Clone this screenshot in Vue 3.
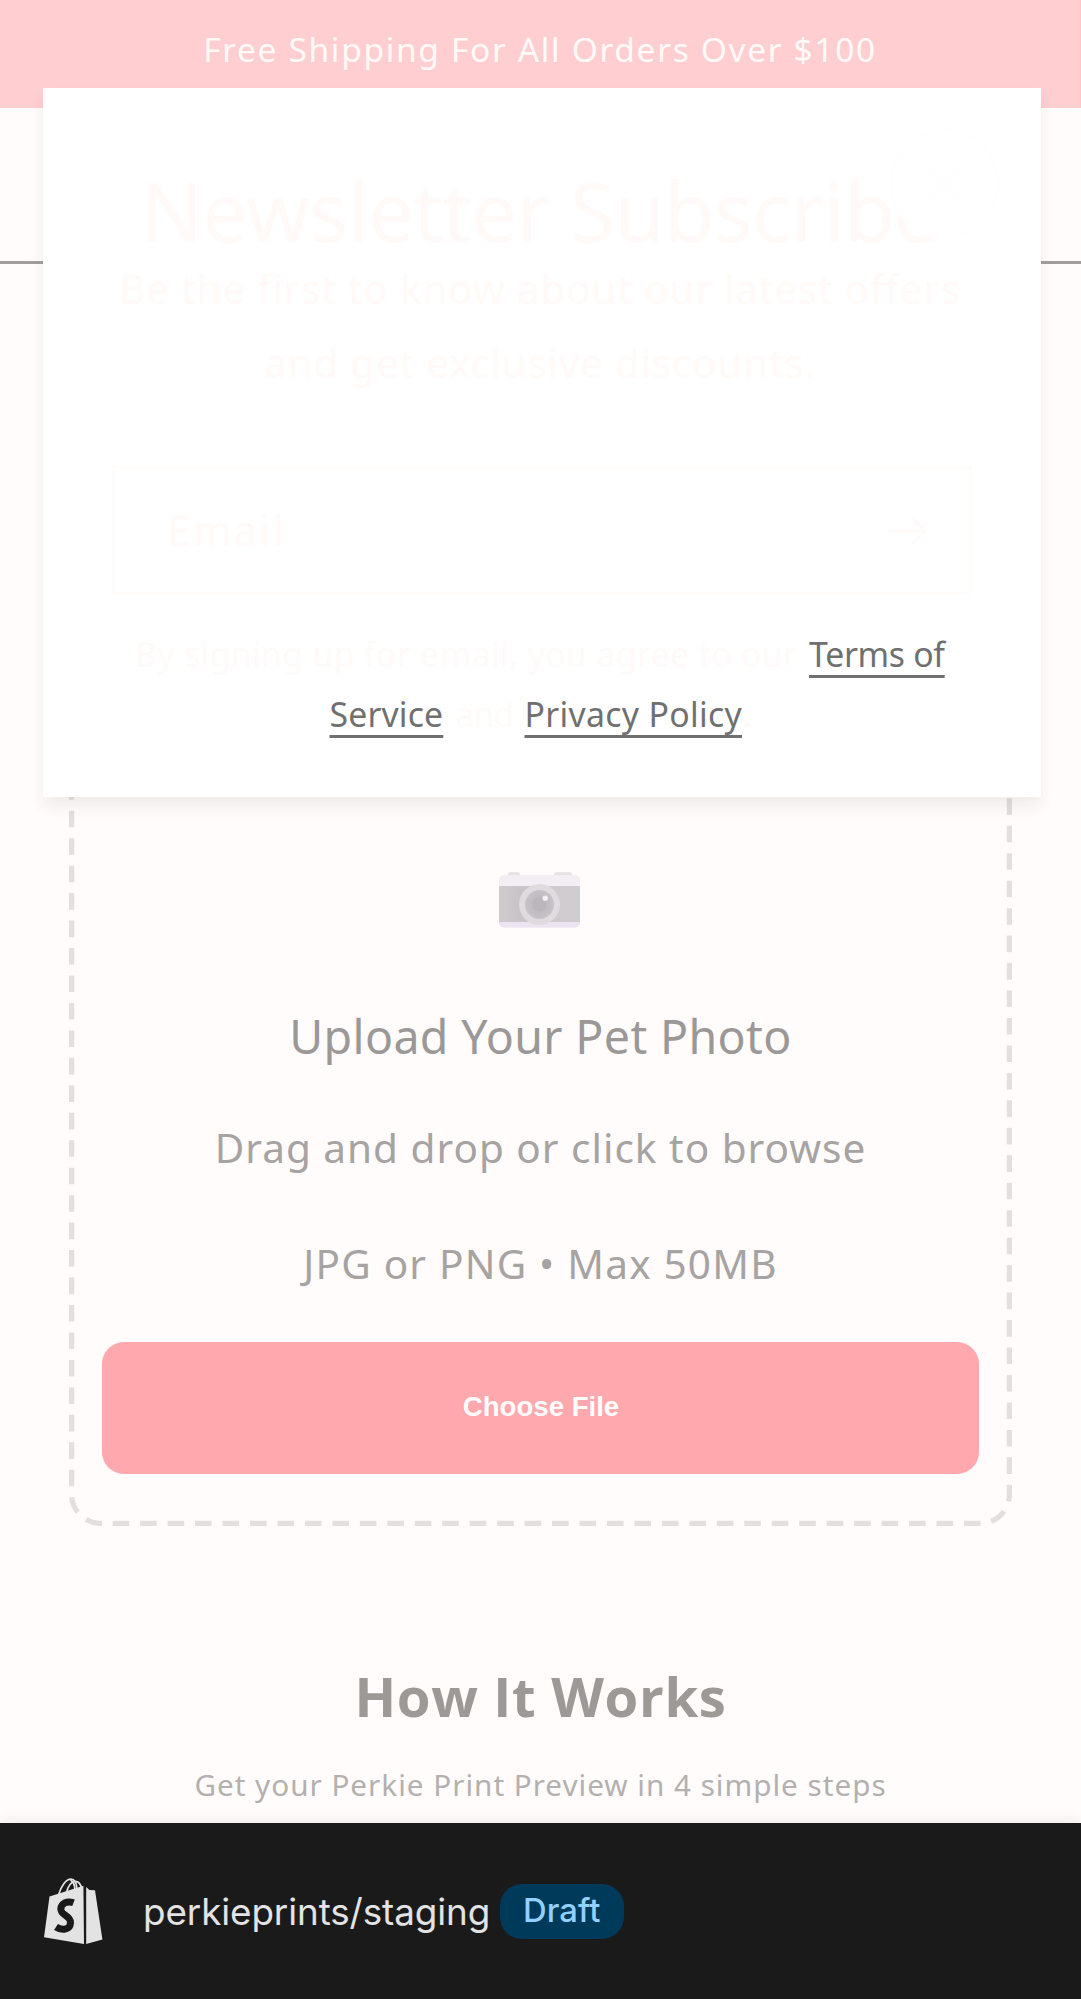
<script setup>
import { ref } from 'vue'

const email = ref('')
const steps = 4
</script>

<template>
  <div class="page">
    <div class="announcement">Free Shipping For All Orders Over $100</div>
    <header class="site-header"></header>

    <main>
      <section class="upload">
        <svg class="upload-outline" width="943" height="768" viewBox="0 0 943 768" fill="none" stroke="#e2dfde" stroke-width="5.2" stroke-dasharray="16.6 10.86" aria-hidden="true">
          <path d="M43.7 765.4H911.4A29 29 0 0 0 940.4 736.4V0" />
          <path d="M33 765.4H31.6A29 29 0 0 1 2.6 736.4V0" />
        </svg>
        <svg class="camera" width="81" height="56" viewBox="0 0 81 56" aria-hidden="true">
          <defs>
            <linearGradient id="body" x1="0" y1="0" x2="1" y2="0">
              <stop offset="0" stop-color="#cfcbce" />
              <stop offset=".25" stop-color="#c8c4c7" />
              <stop offset=".75" stop-color="#cfcbce" />
              <stop offset="1" stop-color="#d0cdd0" />
            </linearGradient>
            <radialGradient id="lens">
              <stop offset="0" stop-color="#bdb8bd" />
              <stop offset=".5" stop-color="#c0bbc0" />
              <stop offset="1" stop-color="#c8c3c9" />
            </radialGradient>
            <linearGradient id="knob" x1="0" y1="0" x2="0" y2="1">
              <stop offset="0" stop-color="#e9e8e8" />
              <stop offset="1" stop-color="#dcdadb" />
            </linearGradient>
          </defs>
          <rect x="9" y="0" width="12" height="6" rx="2" fill="url(#knob)" />
          <rect x="55" y="0" width="18" height="6" rx="2.5" fill="url(#knob)" />
          <rect x="0" y="3" width="81" height="52.5" rx="5" fill="#f2eef3" />
          <path d="M0 49.500H81V50.500A5 5 0 0 1 76 55.500H5A5 5 0 0 1 0 50.500Z" fill="#ece4f1" />
          <rect x="0" y="14" width="81" height="36" fill="url(#body)" />
          <circle cx="40.500" cy="32.500" r="20.500" fill="#dfdbdf" />
          <circle cx="40.500" cy="32.500" r="14.500" fill="url(#lens)" />
          <circle cx="40.500" cy="32.500" r="7" fill="#bbb6bb" />
          <circle cx="46.200" cy="26.300" r="2.700" fill="#f2f0f2" />
        </svg>
        <h3>Upload Your Pet Photo</h3>
        <p>Drag and drop or click to browse</p>
        <p class="formats">JPG or PNG • Max 50MB</p>
        <button class="choose" type="button">Choose File</button>
      </section>

      <section class="how">
        <h2>How It Works</h2>
        <p>Get your Perkie Print Preview in {{ steps }} simple steps</p>
      </section>
    </main>

    <div class="popup" role="dialog">
      <h1>Newsletter Subscribe</h1>
      <p class="lead">Be the first to know about our latest offers</p>
      <p class="lead second">and get exclusive discounts.</p>
      <form class="field" @submit.prevent>
        <input v-model="email" type="email" placeholder="Email" />
        <svg width="39" height="28" viewBox="0 0 39 28" fill="none" stroke="#fff9f7" stroke-width="2.4" stroke-linecap="round" stroke-linejoin="round" aria-hidden="true">
          <path d="M1.500 14H37M24.500 1.500L37 14L24.500 26.500" />
        </svg>
      </form>
      <div class="legal first">
        <span class="by">By signing up for email, you agree to our</span>
        <a class="terms">Terms of</a>
      </div>
      <div class="legal last">
        <a class="service">Service</a>
        <span class="and">and</span>
        <a class="privacy">Privacy Policy</a>
        <span class="dot">.</span>
      </div>
      <button class="close" type="button" aria-label="Close">
        <svg width="36" height="36" viewBox="0 0 36 36" stroke="#fffdfd" stroke-width="2" aria-hidden="true">
          <path d="M1 1L35 35M35 1L1 35" />
        </svg>
      </button>
    </div>

    <footer class="preview-bar">
      <svg class="bag" width="59" height="67" viewBox="0 0 59 67" aria-hidden="true">
        <g fill="none" stroke="#e3e3e3" stroke-width="1.700">
          <path d="M14.500 17C17 8 22 1.200 27 1.200C31 1.200 32.500 5 33 11" />
          <path d="M22.500 14.500C24 8 27.500 3.300 31.500 3.300C34.500 3.300 36.500 6 37.500 10" />
          <path d="M26.500 2C30 4 31 8 31 13" />
        </g>
        <path fill="#e3e3e3" d="M5.500 18.600L39.400 7.800L40 66L0 59.300ZM42.200 9L45.400 12L51 12.200L58.400 61.400L42.200 66Z" />
        <path fill="none" stroke="#1a1a1a" stroke-width="7" stroke-linejoin="round" d="M29.500 24.800C23 22.300 17 25.500 16.800 31C16.700 37.500 26.500 37.500 26.500 44.500C26.500 51.500 18.500 53.300 12 49" />
      </svg>
      <span class="theme">perkieprints/staging</span>
      <span class="badge">Draft</span>
    </footer>
  </div>
</template>

<style>
body {
  margin: 0;
  background: #fffcfb;
}
</style>

<style scoped>
.page {
  position: relative;
  width: 1081px;
  height: 1999px;
  overflow: hidden;
  background: #fffcfb;
  font-family: 'Noto Sans', 'Open Sans', sans-serif;
  text-align: center;
  white-space: nowrap;
}
h1, h2, h3, p {
  margin: 0;
  font-weight: 400;
}
button {
  border: 0;
  padding: 0;
}
.announcement {
  box-sizing: border-box;
  height: 108px;
  border-right: 1px solid #ffc5c9;
  background: #ffced1;
  color: #fffaf8;
  font-size: 33.5px;
  line-height: 98px;
  letter-spacing: 1.65px;
}
.site-header {
  height: 153px;
  border-bottom: 3px solid #a29e9d;
}
.upload {
  position: relative;
  box-sizing: border-box;
  width: 943px;
  height: 768px;
  margin: 494px 0 0 69px;
  padding: 114px 33px 0;
}
.upload-outline {
  position: absolute;
  inset: 0;
}
.upload .camera {
  display: block;
  margin: 0 auto 75px 397px;
}
.upload h3 {
  height: 64px;
  color: #9b9897;
  font-size: 46.5px;
  line-height: 66px;
  letter-spacing: 0.37px;
}
.upload p {
  height: 60px;
  margin-top: 50px;
  color: #a6a3a2;
  font-size: 40.5px;
  line-height: 62px;
  letter-spacing: 1px;
}
.upload .formats {
  margin-top: 56px;
  letter-spacing: 1.2px;
}
.choose {
  display: block;
  width: 877px;
  height: 132px;
  margin-top: 49px;
  border-radius: 22px;
  background: #ffa8ad;
  color: #fffcfb;
  font: 700 27.6px/128px 'Liberation Sans', Arial, sans-serif;
  padding: 0 0 2px 1px;
}
.how {
  padding-top: 130px;
}
.how h2 {
  height: 80px;
  color: #9c9997;
  font: 700 54.5px/80px 'Open Sans', sans-serif;
  letter-spacing: 0.67px;
}
.how p {
  margin-top: 29px;
  color: #b3b0af;
  font-size: 29.7px;
  line-height: 40px;
  letter-spacing: 0.98px;
}
.popup {
  position: absolute;
  left: 43px;
  top: 88px;
  box-sizing: border-box;
  width: 998px;
  height: 709px;
  padding: 82px 69px 0;
  background: #fff;
  box-shadow: 0 10px 14px rgba(60, 40, 40, 0.07);
}
.popup h1 {
  margin-right: 4px;
  color: #fff9f7;
  font-size: 81.5px;
  line-height: 82px;
  letter-spacing: -0.59px;
}
.lead {
  height: 73.5px;
  margin-right: 4px;
  color: #fff9f7;
  font-size: 40.5px;
  line-height: 73.5px;
  letter-spacing: 0.81px;
}
.lead.second {
  letter-spacing: 0.73px;
}
.field {
  box-sizing: border-box;
  display: flex;
  align-items: center;
  justify-content: space-between;
  width: 860px;
  height: 129px;
  margin: 67px 0 29px;
  padding: 0 42px 0 52px;
  border: 3px solid #fffcfc;
}
.field input {
  width: 500px;
  height: 60px;
  padding: 0 0 3px;
  border: 0;
  outline: 0;
  background: none;
  font: 400 42px/57px 'Noto Sans', sans-serif;
  letter-spacing: 2.1px;
}
.field input::placeholder {
  color: #fffaf7;
  opacity: 1;
}
.legal {
  display: flex;
  height: 59.5px;
  color: #fffafa;
  font-size: 33.8px;
  line-height: 60.5px;
  text-align: left;
}
.legal a {
  color: #707070;
  text-decoration: underline;
  text-decoration-thickness: 3px;
  text-underline-offset: 8px;
  text-decoration-skip-ink: none;
}
.first {
  padding-left: 23px;
}
.last {
  padding-left: 217.5px;
}
.by {
  width: 674px;
  letter-spacing: 0.35px;
}
.terms {
  letter-spacing: -0.3px;
}
.service {
  width: 126px;
  letter-spacing: 0.15px;
}
.and {
  width: 69px;
  letter-spacing: -1px;
}
.privacy {
  width: 218.5px;
  letter-spacing: 0.3px;
}
.close {
  position: absolute;
  left: 847px;
  top: 41px;
  display: grid;
  place-items: center;
  box-sizing: border-box;
  width: 109px;
  height: 109px;
  border: 2px solid #fffdfd;
  border-radius: 50%;
  background: #fff;
}
.preview-bar {
  position: absolute;
  left: 0;
  bottom: 0;
  display: flex;
  align-items: center;
  box-sizing: border-box;
  width: 1081px;
  height: 176px;
  padding-left: 44px;
  background: #1a1a1a;
  box-shadow: 0 -3px 14px rgba(40, 30, 30, 0.07);
  font-family: Inter, sans-serif;
}
.theme {
  margin-left: 40px;
  color: #e3e3e3;
  font-size: 36.8px;
  line-height: 50px;
  letter-spacing: -0.09px;
  padding-top: 2px;
}
.badge {
  width: 124px;
  height: 55px;
  margin-left: 9.5px;
  border-radius: 22px;
  background: #003a5a;
  color: #91d0ff;
  font-size: 32.8px;
  font-weight: 550;
  line-height: 53px;
}
</style>
